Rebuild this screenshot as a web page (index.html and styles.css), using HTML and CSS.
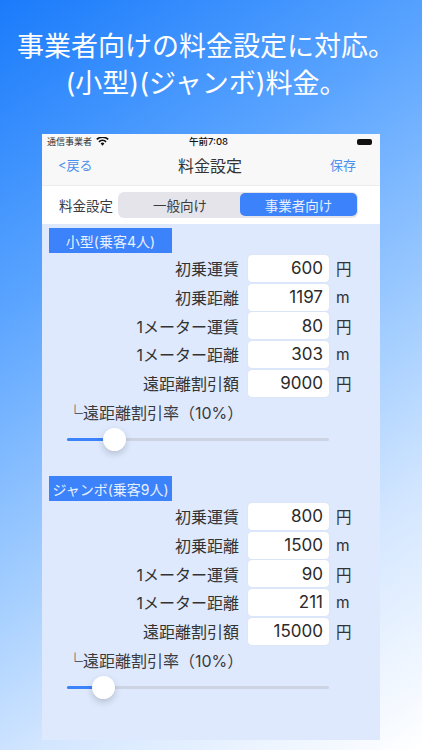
FILE: index.html
```html
<!DOCTYPE html>
<html lang="ja">
<head>
<meta charset="utf-8">
<title>料金設定</title>
<link rel="stylesheet" href="styles.css">
</head>
<body>
<main class="slide">
  <h1 class="headline">事業者向けの料金設定に対応。<br>(小型)(ジャンボ)料金。</h1>
  <div class="phone">
    <div class="status">
      <span class="carrier">通信事業者
        <svg class="wifi" viewBox="0 0 14 10" width="13" height="9"><path d="M7 9.6 4.9 7.2a3 3 0 0 1 4.2 0zM3.7 6 2.4 4.6a6.8 6.8 0 0 1 9.2 0L10.3 6a5 5 0 0 0-6.600 0zM1.200 3.400 0 2a10.400 10.400 0 0 1 14 0l-1.200 1.400a8.600 8.600 0 0 0-11.600 0z" fill="#111"/></svg>
      </span>
      <span class="clock">午前7:08</span>
      <span class="battery"></span>
    </div>
    <div class="nav">
      <span class="nav-link">&lt;戻る</span>
      <span class="nav-title">料金設定</span>
      <span class="nav-link nav-save">保存</span>
    </div>
    <div class="segment-row">
      <span class="segment-label">料金設定</span>
      <div class="segment">
        <span class="segment-item">一般向け</span>
        <span class="segment-item active">事業者向け</span>
      </div>
    </div>
    <div class="content">
      <section class="group">
        <div class="tag">小型(乗客4人)</div>
        <div class="row"><span class="label">初乗運賃</span><span class="field">600</span><span class="unit">円</span></div>
        <div class="row"><span class="label">初乗距離</span><span class="field">1197</span><span class="unit">m</span></div>
        <div class="row"><span class="label">1メーター運賃</span><span class="field">80</span><span class="unit">円</span></div>
        <div class="row"><span class="label">1メーター距離</span><span class="field">303</span><span class="unit">m</span></div>
        <div class="row"><span class="label">遠距離割引額</span><span class="field">9000</span><span class="unit">円</span></div>
        <div class="rate">└遠距離割引率（10%）</div>
        <div class="slider"><span class="fill fill-a"></span><span class="thumb"></span></div>
      </section>
      <section class="group">
        <div class="tag">ジャンボ(乗客9人)</div>
        <div class="row"><span class="label">初乗運賃</span><span class="field">800</span><span class="unit">円</span></div>
        <div class="row"><span class="label">初乗距離</span><span class="field">1500</span><span class="unit">m</span></div>
        <div class="row"><span class="label">1メーター運賃</span><span class="field">90</span><span class="unit">円</span></div>
        <div class="row"><span class="label">1メーター距離</span><span class="field">211</span><span class="unit">m</span></div>
        <div class="row"><span class="label">遠距離割引額</span><span class="field">15000</span><span class="unit">円</span></div>
        <div class="rate">└遠距離割引率（10%）</div>
        <div class="slider"><span class="fill fill-b"></span><span class="thumb"></span></div>
      </section>
    </div>
  </div>
</main>
</body>
</html>
```
FILE: styles.css
```css
* { box-sizing: border-box; }
html, body { margin: 0; padding: 0; }
body {
  width: 422px;
  height: 750px;
  overflow: hidden;
  font-family: Inter, "Noto Sans CJK JP", "Liberation Sans", sans-serif;
  color: #2a2a2e;
}
.slide {
  width: 422px;
  height: 750px;
  display: flex;
  flex-direction: column;
  background: linear-gradient(146deg, #1a7bfb 0%, #5aa4ff 30%, #a9d1ff 60%, #d3e6ff 75%, #ffffff 100%);
}
.headline {
  height: 134px;
  margin: 0;
  padding: 28px 10px 0 0;
  font-size: 27px;
  line-height: 37px;
  font-weight: 400;
  color: #fff;
  text-align: center;
  white-space: nowrap;
}
.phone {
  width: 338px;
  height: 606px;
  margin-left: 42px;
  display: flex;
  flex-direction: column;
  background: #fff;
}
.status {
  height: 15px;
  padding: 0 8px 0 5px;
  display: grid;
  grid-template-columns: 1fr auto 1fr;
  align-items: center;
  background: #f8f8f8;
  font-size: 9px;
  line-height: 15px;
}
.carrier { display: flex; align-items: center; gap: 4px; color: #333; }
.clock { font-weight: 500; font-size: 9.500px; color: #111; padding-right: 2px; }
.battery {
  justify-self: end;
  width: 15px;
  height: 6px;
  border-radius: 2px;
  background: #111;
}
.nav {
  height: 37px;
  padding: 0 0 5px 16px;
  display: grid;
  grid-template-columns: 120px 64px 1fr;
  justify-items: start;
  align-items: center;
  background: #f8f8f8;
  border-bottom: 1px solid #ececec;
}
.nav-title { font-size: 16px; color: #333; white-space: nowrap; }
.nav-link { font-size: 13px; color: #4a90ee; }
.nav-save { margin-left: 88px; }
.segment-row {
  height: 38px;
  padding-left: 17px;
  display: flex;
  align-items: center;
  gap: 5px;
  background: #fff;
}
.segment-label { font-size: 13.500px; color: #3a3a3e; white-space: nowrap; }
.segment {
  width: 240px;
  height: 26px;
  padding: 1px 2px 2px;
  display: grid;
  grid-template-columns: 120px 117px;
  border-radius: 6px;
  background: #e4e4ea;
}
.segment-item {
  display: flex;
  align-items: center;
  justify-content: center;
  border-radius: 5px;
  font-size: 13.500px;
  color: #3a3a3e;
}
.segment-item.active { background: #3c82fb; color: #e8f0ff; }
.content {
  flex: 1;
  padding: 4px 0 0 7px;
  background: #dee9fd;
}
.group { height: 248px; }
.tag {
  width: 123px;
  height: 25px;
  margin-bottom: 1px;
  display: flex;
  align-items: center;
  justify-content: center;
  background: #3c82fb;
  color: #e8f0ff;
  font-size: 14px;
  white-space: nowrap;
}
.row {
  height: 28.700px;
  display: flex;
  align-items: center;
}
.label {
  width: 190px;
  text-align: right;
  font-size: 16px;
  color: #333;
  white-space: nowrap;
}
.field {
  width: 81px;
  height: 27px;
  margin-left: 9px;
  padding-right: 6px;
  display: flex;
  align-items: center;
  justify-content: flex-end;
  border-radius: 4px;
  background: #fff;
  box-shadow: 0 0 1px #c8cedb;
  font-size: 17px;
  color: #2b2b2b;
}
.unit { margin-left: 7px; font-size: 15.500px; color: #333; }
.rate {
  height: 31px;
  margin-left: 18px;
  padding-top: 6px;
  font-size: 16px;
  line-height: 20px;
  color: #3a3a3e;
  white-space: nowrap;
}
.slider {
  position: relative;
  width: 262px;
  height: 3px;
  margin: 10px 0 0 18px;
  border-radius: 2px;
  background: #ccd4e4;
}
.fill {
  position: absolute;
  left: 0;
  top: 0;
  height: 3px;
  border-radius: 2px;
  background: #3c82fb;
}
.fill-a { width: 47px; }
.fill-b { width: 36px; }
.thumb {
  position: absolute;
  top: -10px;
  width: 23px;
  height: 23px;
  border-radius: 50%;
  background: #fff;
  box-shadow: 0 3px 7px rgba(0, 0, 0, .18);
}
.fill-a + .thumb { left: 36px; }
.fill-b + .thumb { left: 25px; }
```
